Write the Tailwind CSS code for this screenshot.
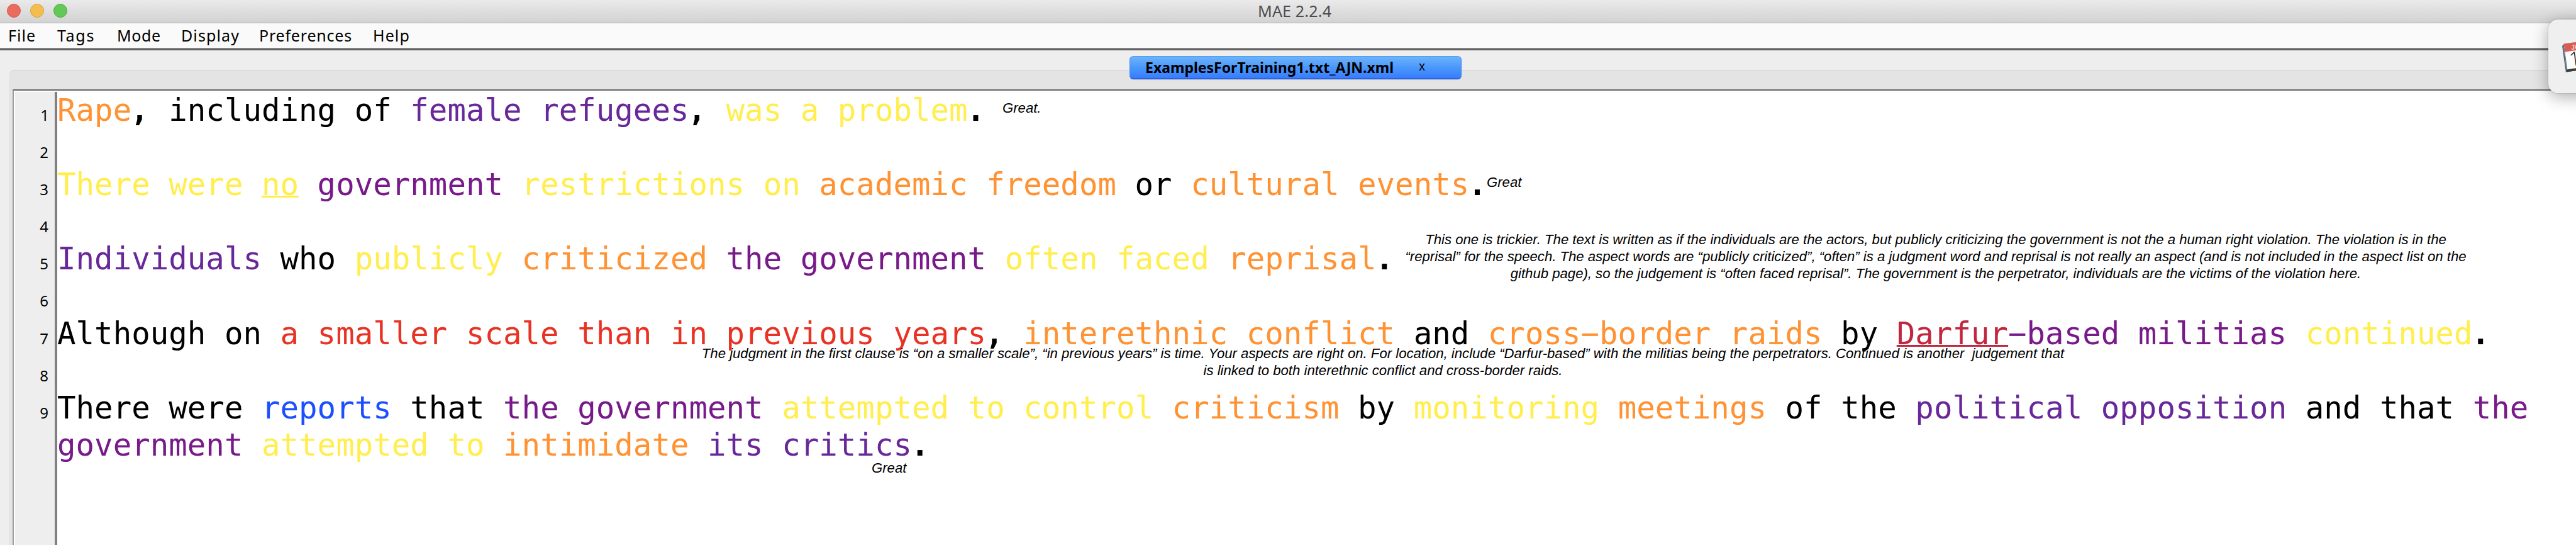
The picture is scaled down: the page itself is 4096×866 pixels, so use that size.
<!DOCTYPE html>
<html lang="en">
<head>
<meta charset="utf-8">
<title>MAE 2.2.4</title>
<script src="https://cdn.jsdelivr.net/npm/@tailwindcss/browser@4"></script>
</head>
<body class="w-[4096px] h-[866px] overflow-hidden bg-[#eeeeee] font-['Noto_Sans',sans-serif] text-black">
<div class="relative w-[4096px] h-[866px] overflow-hidden flex flex-col">

  <!-- Title bar -->
  <header class="relative h-[37px] shrink-0 flex items-center px-[11px] gap-[15px] bg-linear-to-b from-[#eaeaea] to-[#d2d2d2] border-b-[1.5px] border-[#b1b1b1]">
    <span class="size-[22px] -mt-[2px] rounded-full bg-[#ec6b5f] border border-[#d4574c]"></span>
    <span class="size-[22px] -mt-[2px] rounded-full bg-[#f4be4f] border border-[#d9a23b]"></span>
    <span class="size-[22px] -mt-[2px] rounded-full bg-[#64c856] border border-[#4cac3e]"></span>
    <h1 class="absolute left-[2000px] top-0 leading-[34px] text-[25px] tracking-[0.2px] text-[#4c4c4c] whitespace-nowrap">MAE 2.2.4</h1>
  </header>

  <!-- Menu bar -->
  <nav class="h-[39px] shrink-0 bg-[#fafafa] flex pl-[13px] text-[25px] leading-[39px] whitespace-nowrap">
    <span class="w-[78px] tracking-[1px]">File</span>
    <span class="w-[95px] tracking-[1.7px]">Tags</span>
    <span class="w-[102px] tracking-[0.6px]">Mode</span>
    <span class="w-[124px] tracking-[1.1px]">Display</span>
    <span class="w-[181px] tracking-[0.8px]">Preferences</span>
    <span class="tracking-[1.1px]">Help</span>
  </nav>
  <div class="h-[2px] shrink-0 bg-[#828282]"></div>
  <div class="h-[2px] shrink-0 bg-[#636161]"></div>

  <!-- Tabbed pane -->
  <main class="relative flex-1 pt-[31px] pl-[15px] flex flex-col">
    <div class="flex-1 flex flex-col rounded-tl-[8px] bg-[#e4e4e4] border-t border-l border-t-[#d0d0d0] border-l-[#dcdcdc]">
      <div class="h-[30px] shrink-0"></div>
      <div class="flex-1 ml-[4px] flex flex-col bg-white border-t-2 border-t-[#666464] border-l-2 border-l-[#9c9c9c]">
        <div class="flex-1 flex pl-[2px]">
          <div class="mt-[2px] w-[63px] bg-[#eeeeee] pt-[7px] pr-[10px] text-right text-[24px] leading-[59.094px]">
            <div class="relative left-px">1</div><div>2</div><div>3</div><div>4</div><div>5</div><div>6</div><div>7</div><div>8</div><div>9</div>
          </div>
          <div class="mt-[2px] w-[4px] bg-[#808080]"></div>
          <div class="flex-1 font-['DejaVu_Sans_Mono',monospace] text-[49px] leading-[59.094px] tracking-[0.042px] whitespace-pre pt-[2px]"><div class="h-[118.188px]"><span class="text-[#ff9233]">Rape</span><b class="relative -left-[2px]">,</b> including of <span class="text-[#68289a]">female refugees</span><b class="relative -left-[2px]">,</b> <span class="text-[#ffee4d]">was a problem</span><b class="relative -left-[2px]">.</b></div><div class="h-[118.188px]"><span class="text-[#ffee4d]">There were <span class="underline decoration-[2.5px] underline-offset-[1px]">no</span></span> <span class="text-[#781a8a]">government</span> <span class="text-[#ffee4d]">restrictions on</span> <span class="text-[#ff9233]">academic freedom</span> or <span class="text-[#ff9233]">cultural events</span><b class="relative -left-[2px]">.</b></div><div class="h-[118.188px]"><span class="text-[#68289a]">Individuals</span> who <span class="text-[#ffee4d]">publicly</span> <span class="text-[#ff9233]">criticized</span> <span class="text-[#781a8a]">the government</span> <span class="text-[#ffee4d]">often faced</span> <span class="text-[#ff9233]">reprisal</span><b class="relative -left-[2px]">.</b></div><div class="h-[118.188px]">Although on <span class="text-[#e83223]">a smaller scale than in previous years</span><b class="relative -left-[2px]">,</b> <span class="text-[#ff9233]">interethnic conflict</span> and <span class="text-[#ff9233]">cross−border raids</span> by <span class="text-[#c1273f] underline decoration-[2.5px] underline-offset-[1px]">Darfur</span><span class="text-[#781a8a]">−based militias</span> <span class="text-[#ffee4d]">continued</span><b class="relative -left-[2px]">.</b></div><div>There were <span class="text-[#1c4fff]">reports</span> that <span class="text-[#781a8a]">the government</span> <span class="text-[#ffee4d]">attempted to control</span> <span class="text-[#ff9233]">criticism</span> by <span class="text-[#ffee4d]">monitoring</span> <span class="text-[#ff9233]">meetings</span> of the <span class="text-[#68289a]">political opposition</span> and that <span class="text-[#781a8a]">the</span></div><div><span class="text-[#781a8a]">government</span> <span class="text-[#ffee4d]">attempted to</span> <span class="text-[#ff9233]">intimidate</span> <span class="text-[#68289a]">its critics</span><b class="relative -left-[2px]">.</b></div></div>
        </div>
      </div>
    </div>

    <!-- Selected tab, straddling the pane's edge -->
    <div class="absolute left-[1796px] top-[9px] w-[528px] h-[37px] rounded-[6px] bg-linear-to-b from-[#6db3fa] via-[#4a98fb] to-[#387cff] border border-t-[#4e9bf5] border-x-[#3f86f5] border-b-2 border-b-[#2462f0] shadow-[0_1px_1px_rgba(0,0,0,0.15)] flex items-center pl-[24px] whitespace-nowrap">
      <span class="w-[435px] text-[23px] leading-[34px] font-bold">ExamplesForTraining1.txt_AJN.xml</span>
      <span class="text-[19px] leading-[30px] -mt-[4px]">x</span>
    </div>
  </main>

  <!-- Reviewer notes laid over the document -->
  <div class="absolute inset-0 font-['Liberation_Sans',Arial,sans-serif] italic text-[22.15px] leading-[26.9px] text-center whitespace-pre">
    <p class="absolute left-[1594px] top-[159px]">Great.</p>
    <p class="absolute left-[2364px] top-[277px]">Great</p>
    <p class="absolute left-[2178px] w-[1800px] top-[368px]">This one is trickier. The text is written as if the individuals are the actors, but publicly criticizing the government is not the a human right violation. The violation is in the
“reprisal” for the speech. The aspect words are “publicly criticized”, “often” is a judgment word and reprisal is not really an aspect (and is not included in the aspect list on the
github page), so the judgement is “often faced reprisal”. The government is the perpetrator, individuals are the victims of the violation here.</p>
    <p class="absolute left-[999px] w-[2400px] top-[549px]">The judgment in the first clause is “on a smaller scale”, “in previous years” is time. Your aspects are right on. For location, include “Darfur-based” with the militias being the perpetrators. Continued is another  judgement that
is linked to both interethnic conflict and cross-border raids.</p>
    <p class="absolute left-[1386px] top-[731px]">Great</p>
  </div>

  <!-- Notification banner entering from the right -->
  <aside class="absolute left-[4052px] top-[31px] w-[120px] h-[117px] rounded-[15px] bg-[#efefef] shadow-[0_6px_26px_rgba(0,0,0,0.32),0_0_2px_rgba(0,0,0,0.3)]">
    <svg class="absolute left-[20px] top-[34px]" width="60" height="54" viewBox="0 0 60 54">
      <g transform="translate(2 8) rotate(-8)">
        <path d="M0 0 L4 -3 L50 -3 L50 42 L0 42 Z" fill="#4d5d68"/>
        <path d="M1 38 H50 V42 H1 Z" fill="#3a3d3a"/>
        <rect x="3" y="-3" width="50" height="41" fill="#fcfcfc"/>
        <rect x="3" y="-3" width="50" height="13" fill="#d65c54"/>
        <path d="M2 0 V40" stroke="#7f96a5" stroke-width="1"/>
        <text x="14" y="8" font-family="Liberation Sans" font-size="10.5" fill="#fff">JUL</text>
        <text x="8" y="34" font-family="Open Sans" font-weight="300" font-size="31" fill="#222">17</text>
      </g>
    </svg>
  </aside>
</div>
</body>
</html>
